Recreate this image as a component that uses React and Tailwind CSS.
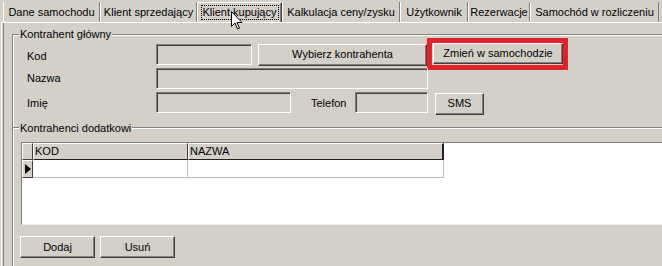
import React from "react";

const raised =
  "border border-t-white border-l-white border-r-[#404040] border-b-[#404040] shadow-[inset_-1px_-1px_0_#808080] bg-[#d4d0c8]";
const sunken =
  "border border-t-[#808080] border-l-[#808080] border-r-white border-b-white shadow-[inset_1px_1px_0_#404040] bg-[#d4d0c8]";

function Btn({ className = "", children }) {
  return (
    <div className={`${raised} flex items-center justify-center shrink-0 ${className}`}>
      <span>{children}</span>
    </div>
  );
}

function Tab({ w, label, selected }) {
  if (selected) {
    return (
      <div
        className={`${w} h-full flex items-center justify-center border-t border-l border-t-white border-l-white border-r border-r-[#404040] shadow-[inset_-1px_0_0_#808080]`}
      >
        <span className="border border-dotted border-black px-[1px] leading-[13px]">{label}</span>
      </div>
    );
  }
  return (
    <div
      className={`${w} h-full flex items-center justify-center border-l border-l-white border-r border-r-[#808080]`}
    >
      <span>{label}</span>
    </div>
  );
}

export default function App() {
  return (
    <div className="relative w-[662px] h-[266px] overflow-hidden bg-[#d4d0c8] text-black text-[11px] leading-[13px] font-['Liberation_Sans',Arial,sans-serif] flex flex-col">
      {/* Tabs */}
      <div className="flex h-[22px] pl-[3px] pt-[2px] shrink-0">
        <Tab w="w-[97px]" label="Dane samochodu" />
        <Tab w="w-[97px]" label="Klient sprzedający" />
        <Tab w="w-[85px]" label="Klient kupujący" selected />
        <Tab w="w-[118px]" label="Kalkulacja ceny/zysku" />
        <Tab w="w-[68px]" label="Użytkownik" />
        <Tab w="w-[62px]" label="Rezerwacje" />
        <Tab w="w-[129px]" label="Samochód w rozliczeniu" />
      </div>

      {/* Panel */}
      <div className="flex-1 ml-[1px] border-l border-t border-white flex flex-col">
        <div className="flex-1 ml-[1px] border-l border-[#808080] flex flex-col">
          {/* Group 1 */}
          <div className="relative ml-[8px] mt-[11px] h-[93px] border-l border-t border-[#808080] shadow-[inset_1px_1px_0_#fff] shrink-0">
            <span className="absolute left-[6px] top-[-8px] bg-[#d4d0c8] px-[1px] leading-[14px]">
              Kontrahent główny
            </span>
            {/* Row Kod */}
            <div className="flex items-center h-[21px] mt-[9px] pl-[14px]">
              <span className="w-[129px] shrink-0 pt-[3px]">Kod</span>
              <div className={`${sunken} w-[96px] h-[21px] shrink-0`} />
              <Btn className="ml-[6px] w-[169px] h-[22px]">Wybierz kontrahenta</Btn>
              <div className="shrink-0 w-[141px] h-[32px] border-[5px] border-[#e0232b] pl-[1px] flex items-center -mt-[2px]">
                <Btn className="w-[130px] h-[21px]">Zmień w samochodzie</Btn>
              </div>
            </div>
            {/* Row Nazwa */}
            <div className="flex items-center h-[21px] mt-[3px] pl-[14px]">
              <span className="w-[129px] shrink-0">Nazwa</span>
              <div className={`${sunken} w-[272px] h-[21px] shrink-0`} />
            </div>
            {/* Row Imię */}
            <div className="flex items-center h-[21px] mt-[3px] pl-[14px]">
              <span className="w-[129px] shrink-0 pt-[2px]">Imię</span>
              <div className={`${sunken} w-[135px] h-[21px] shrink-0`} />
              <span className="w-[44px] ml-[20px] shrink-0 pt-[2px]">Telefon</span>
              <div className={`${sunken} w-[73px] h-[21px] shrink-0`} />
              <Btn className="ml-[7px] w-[49px] h-[22px] mt-[2px]">SMS</Btn>
            </div>
          </div>

          {/* Group 2 */}
          <div className="relative flex-1 ml-[8px] border-l border-t border-[#808080] shadow-[inset_1px_1px_0_#fff] flex flex-col">
            <span className="absolute left-[6px] top-[-7px] bg-[#d4d0c8] px-[1px] leading-[14px]">
              Kontrahenci dodatkowi
            </span>
            {/* Grid */}
            <div className="ml-[8px] mt-[14px] h-[83px] border-t border-l border-[#808080] border-b border-b-[#eeeeee] bg-white flex flex-col shrink-0">
              <div className="flex h-[17px] shrink-0">
                <div className="w-[11px] border-t border-l border-white border-r border-b border-r-[#404040] border-b-[#404040] bg-[#d4d0c8]" />
                <div className="w-[155px] border-t border-l border-white border-r border-b border-r-[#404040] border-b-[#202020] bg-[#d4d0c8] pl-[1px] flex items-center">
                  KOD
                </div>
                <div className="w-[256px] border-t border-l border-white border-r-2 border-b border-r-[#202020] border-b-[#202020] bg-[#d4d0c8] pl-[1px] flex items-center">
                  NAZWA
                </div>
              </div>
              <div className="flex h-[18px] shrink-0">
                <div className="w-[11px] border-t border-l border-white border-r border-b border-r-[#404040] border-b-[#404040] bg-[#d4d0c8] flex items-center justify-center">
                  <svg width="6" height="10" viewBox="0 0 6 10">
                    <path d="M0 0 L6 5 L0 10 Z" fill="#000" />
                  </svg>
                </div>
                <div className="w-[155px] border-r border-b border-[#c0c0c0]" />
                <div className="w-[256px] border-r border-b border-[#c0c0c0]" />
              </div>
            </div>
            {/* Buttons */}
            <div className="flex mt-[11px] ml-[7px] gap-[5px]">
              <Btn className="w-[75px] h-[22px]">Dodaj</Btn>
              <Btn className="w-[75px] h-[22px]">Usuń</Btn>
            </div>
          </div>
        </div>
      </div>

      {/* Mouse cursor */}
      <svg
        className="absolute left-[231px] top-[11px]"
        width="13"
        height="20"
        viewBox="0 0 13 20"
      >
        <path
          d="M0.5 0.5 L0.5 15.5 L4 12 L6.5 18 L8.5 17.2 L6 11.5 L11 11.5 Z"
          fill="#fff"
          stroke="#000"
          strokeWidth="1"
        />
      </svg>
    </div>
  );
}
